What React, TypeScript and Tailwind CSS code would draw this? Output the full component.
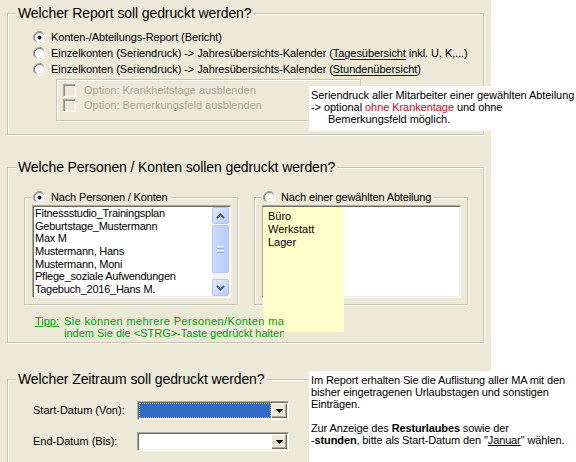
import React, { useId } from "react";

function Radio({ checked }: { checked?: boolean }) {
  const id = useId();
  return (
    <svg width="13" height="13" viewBox="0 0 13 13" className="shrink-0">
      <defs>
        <linearGradient id={id + "o"} x1="0" y1="0" x2="1" y2="1">
          <stop offset="0.35" stopColor="#9C9A8C" />
          <stop offset="0.65" stopColor="#FFFFFF" />
        </linearGradient>
        <linearGradient id={id + "i"} x1="0" y1="0" x2="1" y2="1">
          <stop offset="0.35" stopColor="#6E6C62" />
          <stop offset="0.65" stopColor="#E4E1D2" />
        </linearGradient>
      </defs>
      <circle cx="6.5" cy="6.5" r="6" fill="none" stroke={`url(#${id}o)`} strokeWidth="1" />
      <circle cx="6.5" cy="6.5" r="5" fill="#FFFFFF" stroke={`url(#${id}i)`} strokeWidth="1" />
      {checked && <circle cx="6.5" cy="6.5" r="2" fill="#111111" />}
    </svg>
  );
}

function DisabledCheck() {
  return (
    <div className="w-[13px] h-[13px] shrink-0 border border-t-[#ACA899] border-l-[#ACA899] border-b-white border-r-white shadow-[inset_1px_1px_0_#8E8C80,inset_-1px_-1px_0_#F1EFE2] bg-[#ECE9D8]" />
  );
}

function Group({
  title,
  className,
  children,
}: {
  title: string;
  className: string;
  children?: React.ReactNode;
}) {
  return (
    <div
      className={
        "relative border border-[#C8C5B5] shadow-[1px_1px_0_#fff,inset_1px_1px_0_#fff] " +
        className
      }
    >
      <div className="absolute left-[8px] top-[-10px] px-[2px] bg-[#ECE9D8] text-[14px] leading-[18px] tracking-[-0.1px] whitespace-nowrap">
        {title}
      </div>
      {children}
    </div>
  );
}

function SubGroup({
  title,
  checked,
  children,
}: {
  title: string;
  checked?: boolean;
  children?: React.ReactNode;
}) {
  return (
    <div className="relative w-[214px] h-[108px] border border-[#C8C5B5] shadow-[1px_1px_0_#fff,inset_1px_1px_0_#fff] pl-[7px] pt-[7px]">
      <div className="absolute left-[6px] top-[-7px] px-[2px] bg-[#ECE9D8] flex items-center h-[13px] whitespace-nowrap">
        <Radio checked={checked} />
        <span className="ml-[5px] tracking-[-0.15px]">{title}</span>
      </div>
      {children}
    </div>
  );
}

function Sunken({ className, children }: { className: string; children?: React.ReactNode }) {
  return (
    <div
      className={
        "border border-t-[#ACA899] border-l-[#ACA899] border-b-white border-r-white shadow-[inset_1px_1px_0_#716F64,inset_-1px_-1px_0_#F1EFE2] p-[1px] " +
        className
      }
    >
      {children}
    </div>
  );
}

function ScrollBtn({ up }: { up?: boolean }) {
  return (
    <div className="h-[17px] w-[17px] rounded-[2px] border border-[#B4C8F6] bg-gradient-to-br from-[#E3EBFE] to-[#B8CBF9] flex items-center justify-center shrink-0">
      <svg width="9" height="6" viewBox="0 0 9 6">
        {up ? (
          <polyline points="1,5 4.5,1.5 8,5" fill="none" stroke="#4D6185" strokeWidth="2" />
        ) : (
          <polyline points="1,1 4.5,4.5 8,1" fill="none" stroke="#4D6185" strokeWidth="2" />
        )}
      </svg>
    </div>
  );
}

function Combo({ selected }: { selected?: boolean }) {
  return (
    <Sunken className="w-[152px] h-[19px] flex bg-white">
      <div className={"flex-1 h-full " + (selected ? "bg-[#316AC5] border border-dotted border-[#8FA9D8]" : "bg-white")} />
      <div className="w-[16px] h-full bg-[#ECE9D8] shadow-[inset_1px_1px_0_#fff,inset_-1px_-1px_0_#716F64,inset_-2px_-2px_0_#ACA899] flex items-center justify-center">
        <svg width="7" height="4" viewBox="0 0 7 4">
          <polygon points="0,0 7,0 3.5,4" fill="#000" />
        </svg>
      </div>
    </Sunken>
  );
}

export default function App() {
  const items = [
    "Fitnessstudio_Trainingsplan",
    "Geburtstage_Mustermann",
    "Max M",
    "Mustermann, Hans",
    "Mustermann, Moni",
    "Pflege_soziale Aufwendungen",
    "Tagebuch_2016_Hans M.",
  ];
  return (
    <div className="relative w-[576px] h-[462px] overflow-hidden bg-white font-['Liberation_Sans',Arial,sans-serif] text-[11px] leading-[13px] text-black">
      <div className="w-[491px] h-[462px] bg-[#ECE9D8] pl-[7px] pt-[13px] overflow-hidden">
        {/* Group 1 */}
        <Group title="Welcher Report soll gedruckt werden?" className="w-[477px] h-[122px] pt-[15px] pl-[25px]">
          <div className="flex items-center h-[16px] whitespace-nowrap">
            <Radio checked />
            <span className="ml-[5px] tracking-[-0.1px]">Konten-/Abteilungs-Report (Bericht)</span>
          </div>
          <div className="flex items-center h-[16px] whitespace-nowrap">
            <Radio />
            <span className="ml-[5px] tracking-[-0.07px]">
              Einzelkonten (Seriendruck) -&gt; Jahresübersichts-Kalender (
              <span className="underline decoration-[#0000C0] underline-offset-[2px]">Tagesübersicht</span> inkl. U, K,...)
            </span>
          </div>
          <div className="flex items-center h-[16px] whitespace-nowrap">
            <Radio />
            <span className="ml-[5px] tracking-[-0.07px]">
              Einzelkonten (Seriendruck) -&gt; Jahresübersichts-Kalender (
              <span className="underline decoration-[#0000C0] underline-offset-[2px]">Stundenübersicht</span>)
            </span>
          </div>
          <div className="ml-[23px] mt-[2px] w-[305px] h-[42px] border border-[#C8C5B5] shadow-[1px_1px_0_#fff,inset_1px_1px_0_#fff] pl-[6px] pt-[3px] text-[#ACA899]">
            <div className="flex items-center h-[15px]">
              <DisabledCheck />
              <span className="ml-[8px]">Option: Krankheitstage ausblenden</span>
            </div>
            <div className="flex items-center h-[15px]">
              <DisabledCheck />
              <span className="ml-[8px]">Option: Bemerkungsfeld ausblenden</span>
            </div>
          </div>
        </Group>

        {/* Group 2 */}
        <Group
          title="Welche Personen / Konten sollen gedruckt werden?"
          className="mt-[32px] w-[477px] h-[176px] pt-[29px] pl-[16px]"
        >
          <div className="flex gap-[16px]">
            <SubGroup title="Nach Personen / Konten" checked>
              <Sunken className="w-[199px] h-[93px] bg-white flex">
                <div className="flex-1 pl-[1px] overflow-hidden whitespace-nowrap tracking-[-0.25px]">
                  {items.map((t) => (
                    <div key={t} className="h-[12.67px] leading-[12.67px]">
                      {t}
                    </div>
                  ))}
                </div>
                <div className="w-[17px] h-full flex flex-col bg-[#F3F2EC]">
                  <ScrollBtn up />
                  <div className="mt-[1px] h-[48px] rounded-[2px] border border-[#B4C8F6] bg-gradient-to-r from-[#CCDAFD] to-[#B7CBFA] flex flex-col items-center justify-center gap-[1px]">
                    <div className="w-[7px] h-[1px] bg-[#EEF4FE]" />
                    <div className="w-[7px] h-[1px] bg-[#8EB0F5]" />
                    <div className="w-[7px] h-[1px] bg-[#EEF4FE]" />
                    <div className="w-[7px] h-[1px] bg-[#8EB0F5]" />
                  </div>
                  <div className="flex-1" />
                  <ScrollBtn />
                </div>
              </Sunken>
            </SubGroup>
            <SubGroup title="Nach einer gewählten Abteilung">
              <Sunken className="w-[199px] h-[93px] bg-white" />
            </SubGroup>
          </div>
          <div className="relative z-10 mt-[10px] ml-[11px] flex text-[#00A000] leading-[12px] whitespace-nowrap">
            <div className="w-[29px] underline">Tipp:</div>
            <div className="w-[220px] overflow-hidden">
              <div className="tracking-[0.4px]">Sie können mehrere Personen/Konten markieren,</div>
              <div>indem Sie die &lt;STRG&gt;-Taste gedrückt halten</div>
            </div>
          </div>
        </Group>

        {/* Group 3 */}
        <Group
          title="Welcher Zeitraum soll gedruckt werden?"
          className="mt-[36px] w-[477px] h-[100px] pt-[21px] pl-[25px]"
        >
          <div className="flex items-center">
            <div className="w-[104px]">Start-Datum (Von):</div>
            <Combo selected />
          </div>
          <div className="flex items-center mt-[12px]">
            <div className="w-[104px]">End-Datum (Bis):</div>
            <Combo />
          </div>
        </Group>
      </div>

      {/* Yellow tooltip over department list */}
      <div className="absolute left-[263px] top-[207px] w-[81px] h-[125px] bg-[#FFFFCC] pl-[5px] pt-[3px]">
        <div>Büro</div>
        <div>Werkstatt</div>
        <div>Lager</div>
      </div>

      {/* Tooltip 1 */}
      <div className="absolute left-[309px] top-[86px] w-[267px] h-[45px] bg-white pl-[2px] pt-[3px] leading-[12px] tracking-[-0.06px] whitespace-nowrap">
        <div>Seriendruck aller Mitarbeiter einer gewählten Abteilung</div>
        <div>
          -&gt; optional <span className="text-[#E8001C]">ohne Krankentage</span> und ohne
        </div>
        <div className="pl-[17px]">Bemerkungsfeld möglich.</div>
      </div>

      {/* Tooltip 2 */}
      <div className="absolute left-[309px] top-[371px] w-[267px] h-[91px] bg-white pl-[2px] pt-[3px] leading-[12px] tracking-[-0.12px] whitespace-nowrap">
        <div>Im Report erhalten Sie die Auflistung aller MA mit den</div>
        <div>bisher eingetragenen Urlaubstagen und sonstigen</div>
        <div>Einträgen.</div>
        <div className="h-[12px]" />
        <div>
          Zur Anzeige des <b>Resturlaubes</b> sowie der
        </div>
        <div>
          -<b>stunden</b>, bitte als Start-Datum den "<span className="underline">Januar</span>" wählen.
        </div>
      </div>
    </div>
  );
}
